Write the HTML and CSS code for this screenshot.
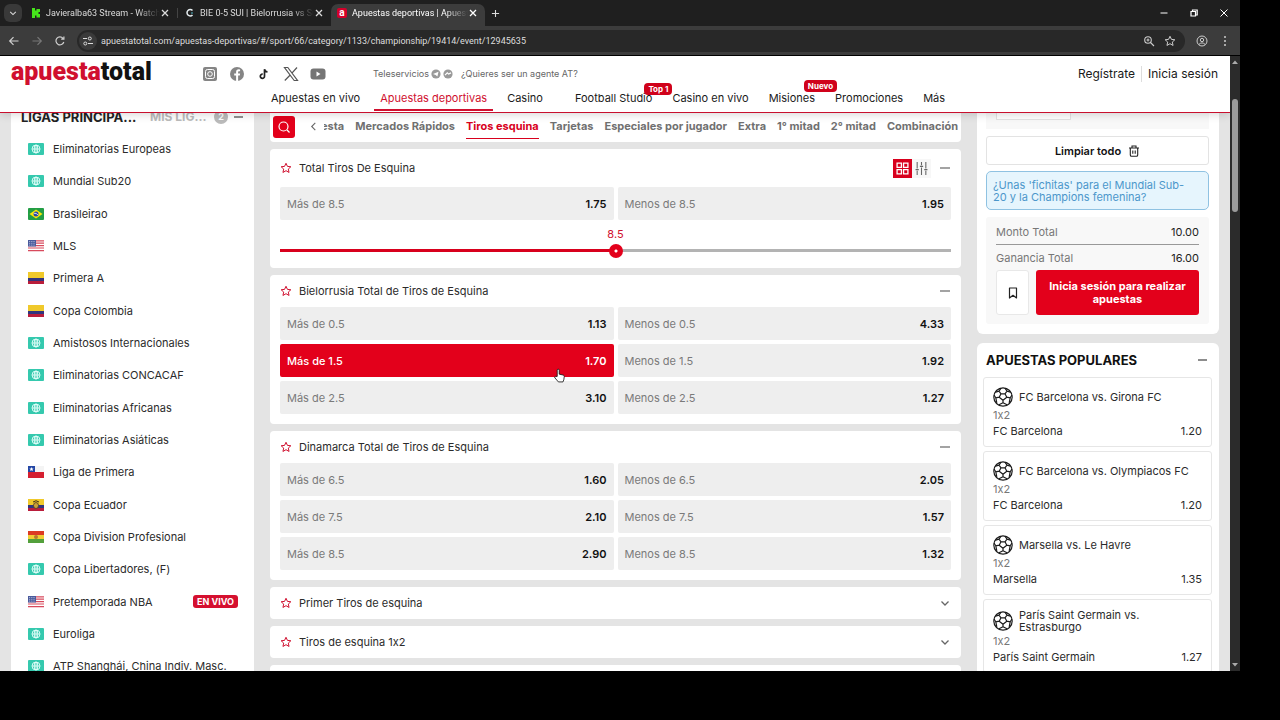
FILE: index.html
```html
<!DOCTYPE html>
<html lang="es">
<head>
<meta charset="utf-8">
<title>Apuestas deportivas | Apuesta Total</title>
<link rel="stylesheet" href="styles.css">
</head>
<body>
<svg class="defs" aria-hidden="true">
  <symbol id="star" viewBox="0 0 24 24"><path d="M12 2.500l2.900 6.300 6.800.7-5.100 4.600 1.500 6.800L12 17.400l-6.100 3.500 1.500-6.800-5.100-4.600 6.800-.7z" fill="none" stroke="currentColor" stroke-width="2" stroke-linejoin="round"/></symbol>
  <symbol id="close" viewBox="0 0 10 10"><path d="M2 2l6 6M8 2L2 8" stroke="currentColor" stroke-width="1.300" fill="none"/></symbol>
  <symbol id="minus" viewBox="0 0 10 10"><path d="M0 5h10" stroke="currentColor" stroke-width="1.200"/></symbol>
  <symbol id="down" viewBox="0 0 10 10"><path d="M1.500 3.500L5 7l3.500-3.500" stroke="currentColor" stroke-width="1.300" fill="none"/></symbol>
  <symbol id="world" viewBox="0 0 16 12"><rect width="16" height="12" rx="1" fill="#35c9ae"/><g fill="none" stroke="#e6fffa" stroke-width=".9"><circle cx="8" cy="6" r="4"/><ellipse cx="8" cy="6" rx="1.800" ry="4"/><path d="M4 6h8M8 2v8"/></g></symbol>
  <symbol id="br" viewBox="0 0 16 12"><rect width="16" height="12" rx="1" fill="#229e45"/><path d="M8 1.500L14.500 6 8 10.500 1.500 6z" fill="#f8e509"/><circle cx="8" cy="6" r="2.500" fill="#2b49a3"/><path d="M5.800 5.200q2.700-.3 4.300 1.800" stroke="#fff" stroke-width=".8" fill="none"/></symbol>
  <symbol id="us" viewBox="0 0 16 12"><rect width="16" height="12" fill="#fff"/><path d="M0 .8h16M0 3.200h16M0 5.600h16M0 8h16M0 10.600h16" stroke="#d84a5d" stroke-width="1.200"/><rect width="8" height="6.500" fill="#4a5a9c"/><path d="M1 1.500h6M1 3.300h6M1 5.100h6" stroke="#ccd3ea" stroke-width=".7" stroke-dasharray="1 .8"/></symbol>
  <symbol id="co" viewBox="0 0 16 12"><rect width="16" height="6" fill="#f0c92b"/><rect y="6" width="16" height="3" fill="#31357e"/><rect y="9" width="16" height="3" fill="#b91d3b"/></symbol>
  <symbol id="cl" viewBox="0 0 16 12"><rect width="16" height="6" fill="#f4f4f4"/><rect width="7" height="6" fill="#2447a5"/><rect y="6" width="16" height="6" fill="#d51f30"/><path d="M3.500 1l.6 1.400 1.500.1-1.100 1 .3 1.500-1.300-.8-1.300.8.300-1.500-1.100-1 1.500-.1z" fill="#fff"/></symbol>
  <symbol id="ec" viewBox="0 0 16 12"><rect width="16" height="6" fill="#f0c92b"/><rect y="6" width="16" height="3" fill="#31357e"/><rect y="9" width="16" height="3" fill="#b91d3b"/><ellipse cx="8" cy="6.500" rx="2.500" ry="3" fill="#c9a13a" stroke="#4b3a20" stroke-width=".8"/><path d="M5 3q3-2.500 6 0" stroke="#3b2d1c" fill="none"/></symbol>
  <symbol id="bo" viewBox="0 0 16 12"><rect width="16" height="4" fill="#dc3b24"/><rect y="4" width="16" height="4" fill="#f1cf35"/><rect y="8" width="16" height="4" fill="#53a03c"/><circle cx="8" cy="6" r="2" fill="#b57b30"/></symbol>
  <symbol id="ball" viewBox="0 0 20 20"><g fill="none" stroke="#1b1b1b" stroke-width="1.200" stroke-linejoin="round"><circle cx="10" cy="10" r="9.200"/><path d="M8 6.800h4l1.800 3.400L10 13.200 6.200 10.200zM8 6.800L6 4.200M12 6.800l2-2.600M13.800 10.200l3.400.6M6.200 10.200l-3.400.6M10 13.200v2.600M6 4.200L2.600 5.200M6 4.200L8 1.200M14 4.200l3.400 1M14 4.200l-2-3M17.200 10.800L19 8M17.200 10.800l-1 5M2.800 10.800L1 8M2.800 10.800l1 5M10 15.800l-4 2M10 15.800l4 2"/></g></symbol>
</svg>

<div class="window">
  <div class="tabstrip">
    <button class="tabmenu" aria-label="Buscar pestañas"><svg viewBox="0 0 10 10"><use href="#down"/></svg></button>
    <div class="tab"><svg class="fav" viewBox="0 0 10 10"><path d="M1 0h3v2.500h1.500V1H9v3H7.500v2H9v3.500H5.500V7.500H4V10H1z" fill="#46e51b"/></svg><span class="tabname">Javieralba63 Stream - Watch Li</span><svg class="x" viewBox="0 0 10 10"><use href="#close"/></svg></div>
    <div class="tab divided"><svg class="fav" viewBox="0 0 10 10"><path d="M7.500 2.500A3.200 3.200 0 1 0 7.500 7" fill="none" stroke="#e6edf0" stroke-width="1.500"/><path d="M6 5h2" stroke="#4cb6c7"/></svg><span class="tabname">BIE 0-5 SUI | Bielorrusia vs Suiz</span><svg class="x" viewBox="0 0 10 10"><use href="#close"/></svg></div>
    <div class="tab active"><span class="fav at">a</span><span class="tabname">Apuestas deportivas | Apuesta</span><svg class="x" viewBox="0 0 10 10"><use href="#close"/></svg></div>
    <button class="newtab" aria-label="Nueva pestaña"><svg viewBox="0 0 10 10"><path d="M5 1v8M1 5h8" stroke="currentColor" stroke-width="1.200"/></svg></button>
    <div class="winctl">
      <svg viewBox="0 0 10 10"><path d="M1.500 5h7" stroke="#fff"/></svg>
      <svg viewBox="0 0 10 10"><path d="M2 3.500h4.500V8H2zM3.500 3V2h4.700v5H7" fill="none" stroke="#fff" stroke-width="1.200"/></svg>
      <svg viewBox="0 0 10 10"><path d="M1.500 1.500l7 7M8.500 1.500l-7 7" stroke="#fff"/></svg>
    </div>
  </div>
  <div class="toolbar">
    <svg viewBox="0 0 12 12"><path d="M10.500 6H2M5.500 2.200L1.700 6l3.800 3.800" fill="none" stroke="#d0d0d0" stroke-width="1.200"/></svg>
    <svg viewBox="0 0 12 12"><path d="M1.500 6H10M6.500 2.200L10.300 6 6.500 9.800" fill="none" stroke="#777" stroke-width="1.200"/></svg>
    <svg viewBox="0 0 12 12"><path d="M9.800 7A4 4 0 1 1 9 3.300M9.900 1.500v2.700H7.200" fill="none" stroke="#d0d0d0" stroke-width="1.200"/></svg>
    <div class="address">
      <span class="siteinfo"><svg viewBox="0 0 12 12"><path d="M1 3.500h4M6 8.500h5" stroke="#ddd"/><circle cx="7.800" cy="3.500" r="1.500" fill="none" stroke="#ddd"/><circle cx="3.300" cy="8.500" r="1.500" fill="none" stroke="#ddd"/></svg></span>
      <input class="url" aria-label="Dirección" value="apuestatotal.com/apuestas-deportivas/#/sport/66/category/1133/championship/19414/event/12945635">
      <svg viewBox="0 0 12 12"><circle cx="5" cy="5" r="3.300" fill="none" stroke="#ccc" stroke-width="1.100"/><path d="M7.500 7.500L11 11M3.500 5h3M5 3.500v3" stroke="#ccc" stroke-width="1.100"/></svg>
      <svg class="fave" viewBox="0 0 24 24"><use href="#star"/></svg>
    </div>
    <svg viewBox="0 0 12 12"><g fill="none" stroke="#ccc"><circle cx="6" cy="6" r="5"/><circle cx="6" cy="5" r="1.700"/><path d="M2.800 9.500Q6 6.300 9.200 9.500"/></g></svg>
    <svg viewBox="0 0 12 12" fill="#ccc"><circle cx="6" cy="2" r="1"/><circle cx="6" cy="6" r="1"/><circle cx="6" cy="10" r="1"/></svg>
  </div>

  <div class="viewport">
    <div class="page">
      <header class="site">
        <div class="top">
          <a class="logo" href="#"><b>apuesta</b>total</a>
          <div class="social">
            <svg viewBox="0 0 16 16"><rect x="1" y="1" width="14" height="14" rx="2" fill="#858585"/><rect x="3.500" y="3.500" width="9" height="9" rx="2" fill="none" stroke="#fff"/><circle cx="8" cy="8" r="2.300" fill="none" stroke="#fff"/></svg>
            <svg viewBox="0 0 16 16"><circle cx="8" cy="8" r="7" fill="#858585"/><path d="M7.100 15V9.600H5.200V7.500h1.900V6.100c0-1.900 1-2.800 2.600-2.800l1.400.1v1.800h-.9c-.8 0-1.100.4-1.100 1v1.300h2l-.3 2.100H9.100V15z" fill="#fff"/></svg>
            <svg viewBox="0 0 16 16"><path d="M8.500 3.200v7a2.100 2.100 0 1 1-1.800-2M8.500 3.200q.3 2.500 3 2.700" fill="none" stroke="#222" stroke-width="1.700"/></svg>
            <svg viewBox="0 0 16 16"><path d="M1.500 1.500h3.300l9.700 13h-3.300zM14 1.500L8.900 7.200M7.200 9l-5.400 5.500" fill="none" stroke="#555" stroke-width="1.200"/></svg>
            <svg viewBox="0 0 16 16"><rect x=".5" y="2.500" width="15" height="11" rx="3" fill="#757575"/><path d="M6.500 5.500v5l4-2.500z" fill="#fff"/></svg>
          </div>
          <div class="tele"><span>Teleservicios</span>
            <svg viewBox="0 0 10 10"><circle cx="5" cy="5" r="4.600" fill="#999"/><path d="M2 5l5.500-2.200L6.400 7.500 4.600 6z" fill="#fff"/></svg>
            <svg viewBox="0 0 10 10"><circle cx="5" cy="5" r="4.600" fill="#999"/><path d="M2 6.200l2.300-2.300 1.300 1.200L8 3.900" stroke="#fff" stroke-width="1.200" fill="none"/></svg>
          </div>
          <a class="agent" href="#">¿Quieres ser un agente AT?</a>
          <div class="account"><a href="#">Regístrate</a><a href="#">Inicia sesión</a></div>
        </div>
        <nav class="main">
          <a href="#">Apuestas en vivo</a><a href="#" class="on">Apuestas deportivas</a><a href="#" class="wide">Casino</a><a href="#">Football Studio<span class="badge">Top 1</span></a><a href="#">Casino en vivo</a><a href="#">Misiones<span class="badge high">Nuevo</span></a><a href="#">Promociones</a><a href="#">Más</a>
        </nav>
      </header>

      <div class="columns">
        <aside class="leagues">
          <div class="ltabs"><h2>LIGAS PRINCIPA...</h2><span>MIS LIG...</span><i>2</i><svg viewBox="0 0 10 10"><use href="#minus"/></svg></div>
          <ul>
            <li><a href="#"><svg><use href="#world"/></svg>Eliminatorias Europeas</a></li>
            <li><a href="#"><svg><use href="#world"/></svg>Mundial Sub20</a></li>
            <li><a href="#"><svg><use href="#br"/></svg>Brasileirao</a></li>
            <li><a href="#"><svg><use href="#us"/></svg>MLS</a></li>
            <li><a href="#"><svg><use href="#co"/></svg>Primera A</a></li>
            <li><a href="#"><svg><use href="#co"/></svg>Copa Colombia</a></li>
            <li><a href="#"><svg><use href="#world"/></svg>Amistosos Internacionales</a></li>
            <li><a href="#"><svg><use href="#world"/></svg>Eliminatorias CONCACAF</a></li>
            <li><a href="#"><svg><use href="#world"/></svg>Eliminatorias Africanas</a></li>
            <li><a href="#"><svg><use href="#world"/></svg>Eliminatorias Asiáticas</a></li>
            <li><a href="#"><svg><use href="#cl"/></svg>Liga de Primera</a></li>
            <li><a href="#"><svg><use href="#ec"/></svg>Copa Ecuador</a></li>
            <li><a href="#"><svg><use href="#bo"/></svg>Copa Division Profesional</a></li>
            <li><a href="#"><svg><use href="#world"/></svg>Copa Libertadores, (F)</a></li>
            <li><a href="#"><svg><use href="#us"/></svg>Pretemporada NBA<span class="live">EN VIVO</span></a></li>
            <li><a href="#"><svg><use href="#world"/></svg>Euroliga</a></li>
            <li><a href="#"><svg><use href="#world"/></svg>ATP Shanghái, China Indiv. Masc.</a></li>
          </ul>
        </aside>

        <main class="markets">
          <div class="panel filter">
            <button class="search" aria-label="Buscar"><svg viewBox="0 0 14 14"><circle cx="6.500" cy="6.500" r="4.500" fill="none" stroke="#fff" stroke-width="1.200"/><path d="M10 10l2.500 2.500" stroke="#fff" stroke-width="1.200"/></svg></button>
            <button class="prev" aria-label="Anterior"><svg viewBox="0 0 10 10"><path d="M7 1L3 5l4 4" fill="none" stroke="#666" stroke-width="1.200"/></svg></button>
            <div class="cats"><a href="#">esta</a><a href="#">Mercados Rápidos</a><a href="#" class="on">Tiros esquina</a><a href="#">Tarjetas</a><a href="#">Especiales por jugador</a><a href="#">Extra</a><a href="#">1° mitad</a><a href="#">2° mitad</a><a href="#">Combinación</a></div>
          </div>

          <section class="panel">
            <div class="head tall"><svg class="st"><use href="#star"/></svg><h3>Total Tiros De Esquina</h3>
              <button class="view on" aria-label="Cuadrícula"><svg viewBox="0 0 12 12"><path d="M1 1h4v4H1zM7 1h4v4H7zM1 7h4v4H1zM7 7h4v4H7z" fill="none" stroke="#fff" stroke-width="1.200"/></svg></button>
              <button class="view" aria-label="Deslizador"><svg viewBox="0 0 12 12"><path d="M2 0v6M2 8v4M6 0v3M6 5v7M10 0v6M10 8v4M.5 7h3M4.500 4h3M8.500 7h3" stroke="#666" fill="none"/></svg></button>
              <svg class="fold"><use href="#minus"/></svg></div>
            <div class="odds">
              <button><span>Más de 8.5</span><b>1.75</b></button><button><span>Menos de 8.5</span><b>1.95</b></button>
            </div>
            <div class="slide"><label for="line">8.5</label><input id="line" type="range" min="6.5" max="10.5" step="1" value="8.5"></div>
          </section>

          <section class="panel">
            <div class="head"><svg class="st"><use href="#star"/></svg><h3>Bielorrusia Total de Tiros de Esquina</h3><svg class="fold"><use href="#minus"/></svg></div>
            <div class="odds end">
              <button><span>Más de 0.5</span><b>1.13</b></button><button><span>Menos de 0.5</span><b>4.33</b></button>
              <button class="sel"><span>Más de 1.5</span><b>1.70</b><svg class="hand" viewBox="0 0 12 16"><path d="M3.500 9V2.200a1.100 1.100 0 0 1 2.200 0V6.500l4.300 1q1.300.4 1.200 1.700l-.5 3.500-.9 2.300H4.800L1 10.600q-.8-1.300.5-1.600z" fill="#fff" stroke="#111" stroke-width=".9"/></svg></button><button><span>Menos de 1.5</span><b>1.92</b></button>
              <button><span>Más de 2.5</span><b>3.10</b></button><button><span>Menos de 2.5</span><b>1.27</b></button>
            </div>
          </section>

          <section class="panel">
            <div class="head"><svg class="st"><use href="#star"/></svg><h3>Dinamarca Total de Tiros de Esquina</h3><svg class="fold"><use href="#minus"/></svg></div>
            <div class="odds end">
              <button><span>Más de 6.5</span><b>1.60</b></button><button><span>Menos de 6.5</span><b>2.05</b></button>
              <button><span>Más de 7.5</span><b>2.10</b></button><button><span>Menos de 7.5</span><b>1.57</b></button>
              <button><span>Más de 8.5</span><b>2.90</b></button><button><span>Menos de 8.5</span><b>1.32</b></button>
            </div>
          </section>

          <section class="panel"><div class="head"><svg class="st"><use href="#star"/></svg><h3>Primer Tiros de esquina</h3><svg class="fold"><use href="#down"/></svg></div></section>
          <section class="panel"><div class="head"><svg class="st"><use href="#star"/></svg><h3>Tiros de esquina 1x2</h3><svg class="fold"><use href="#down"/></svg></div></section>
          <section class="panel"><div class="head"></div></section>
        </main>

        <aside class="slip">
          <section class="ticket">
            <div class="stake"><div class="field"></div></div>
            <button class="clear">Limpiar todo <svg viewBox="0 0 12 12"><path d="M1 3h10M2.300 3v7q0 1.300 1.300 1.300h4.800q1.300 0 1.300-1.300V3M4 3V1h4v2M4.800 5.500v3.300M7.200 5.500v3.300" fill="none" stroke="#222" stroke-width="1.100"/></svg></button>
            <a class="promo" href="#">¿Unas 'fichitas' para el Mundial Sub-20 y la Champions femenina?</a>
            <div class="totals">
              <p class="ruled"><span>Monto Total</span><b>10.00</b></p>
              <p><span>Ganancia Total</span><b>16.00</b></p>
              <div class="acts"><button class="save" aria-label="Guardar"><svg viewBox="0 0 12 12"><path d="M2.500 1h7v10L6 8.300 2.500 11z" fill="none" stroke="#222" stroke-width="1.200" stroke-linejoin="round"/></svg></button><button class="login">Inicia sesión para realizar apuestas</button></div>
            </div>
          </section>
          <section class="popular">
            <div class="phead"><h2>APUESTAS POPULARES</h2><svg><use href="#minus"/></svg></div>
            <article><h4><svg><use href="#ball"/></svg>FC Barcelona vs. Girona FC</h4><p class="mk">1x2</p><p><span>FC Barcelona</span><span>1.20</span></p></article>
            <article><h4><svg><use href="#ball"/></svg>FC Barcelona vs. Olympiacos FC</h4><p class="mk">1x2</p><p><span>FC Barcelona</span><span>1.20</span></p></article>
            <article><h4><svg><use href="#ball"/></svg>Marsella vs. Le Havre</h4><p class="mk">1x2</p><p><span>Marsella</span><span>1.35</span></p></article>
            <article><h4><svg><use href="#ball"/></svg>París Saint Germain vs. Estrasburgo</h4><p class="mk">1x2</p><p><span>París Saint Germain</span><span>1.27</span></p></article>
          </section>
        </aside>
      </div>
    </div>
    <div class="scroll"><svg viewBox="0 0 10 10"><path d="M2 7h6L5 3.500z" fill="#aaa"/></svg><div class="track"><div class="thumb"></div></div><svg viewBox="0 0 10 10"><path d="M2 3h6L5 6.500z" fill="#aaa"/></svg></div>
  </div>
</div>
</body>
</html>
```
FILE: styles.css
```css
* { box-sizing: border-box; margin: 0; padding: 0; }
body { height: 100vh; padding: 0 40px 49px 0; background: #000; overflow: hidden; font: 11px/16px Inter, "Liberation Sans", sans-serif; font-feature-settings: "calt" 0; color: #2b2b2b; }
.defs { position: absolute; width: 0; height: 0; }
button { font: inherit; border: 0; background: none; color: inherit; }
a { color: inherit; text-decoration: none; }
ul { list-style: none; }
svg { display: block; flex: none; }
.window { height: 100%; display: flex; flex-direction: column; overflow: hidden; }

/* Browser frame */
.tabstrip { display: flex; height: 26px; background: #1f1f1f; color: #dcdcdc; font: 9px/12px Roboto, "Noto Sans", sans-serif; flex: none; }
.tabmenu { width: 18px; height: 18px; margin: 4px 1px 4px 4px; border-radius: 6px; background: #393939; }
.tabmenu svg { width: 8px; height: 8px; margin: 0 auto; }
.tab { width: 154px; display: flex; align-items: center; gap: 5px; padding: 0 7px 0 8px; position: relative; }
.tab .x { margin-left: -5px; }
.divided::before { content: ""; position: absolute; left: 0; top: 8px; width: 1px; height: 10px; background: #444; }
.tab.active { background: #3c3c3c; margin-top: 4px; border-radius: 7px 7px 0 0; padding: 0 7px 4px 6px; color: #fff; }
.fav { width: 10px; height: 10px; flex: none; }
.at { background: #d4002a; color: #fff; border-radius: 2px; font: 700 10px/9px Roboto, sans-serif; text-align: center; }
.tabname { flex: 1; overflow: hidden; white-space: nowrap; mask-image: linear-gradient(to right, #000 80%, transparent); }
.x { width: 10px; height: 10px; }
.newtab { width: 20px; }
.newtab svg { width: 9px; height: 9px; margin: 0 auto; }
.winctl { margin-left: auto; display: flex; align-items: center; gap: 20px; padding-right: 11px; }
.winctl svg { width: 10px; height: 10px; }
.toolbar { display: flex; align-items: center; gap: 11px; height: 30px; padding: 0 9px 0 8px; background: #3c3c3c; border-bottom: 1px solid #000; flex: none; }
.toolbar svg { width: 12px; height: 12px; }
.address { flex: 1; display: flex; align-items: center; gap: 9px; height: 22px; padding: 0 9px 0 1px; border-radius: 11px; background: #282828; color: #ccc; }
.siteinfo { width: 18px; height: 18px; padding: 3px; margin: 0 -5px 0 1px; border-radius: 9px; background: #3a3a3a; }
.url { flex: 1; border: 0; background: none; color: #dedede; font: 9px/12px Roboto, "Noto Sans", sans-serif; outline: 0; }

.viewport { flex: 1; display: flex; min-height: 0; }
.page { flex: 1; display: flex; flex-direction: column; min-width: 0; background: #e4e4e4; overflow: hidden; }
.scroll { width: 10px; display: flex; flex-direction: column; background: #2b2b2b; }
.scroll svg { width: 10px; height: 12px; }
.track { flex: 1; padding: 31px 2px 0; }
.thumb { height: 113px; border-radius: 3px; background: #9b9b9b; }

/* Site header */
.site { position: relative; z-index: 2; height: 57px; flex: none; background: #fff; border-bottom: 1px solid #c8102e; box-shadow: 0 2px 8px rgba(0,0,0,.15); }
.top { display: flex; align-items: center; height: 35px; padding: 0 12px 0 11px; color: #666; font-size: 9px; }
.logo { width: 191px; margin-top: -3px; font: 900 25px/32px Roboto, sans-serif; color: #111; }
.logo b { color: #d0102f; }
.social { display: flex; gap: 11px; width: 171px; }
.social svg { width: 16px; height: 16px; }
.tele { display: flex; align-items: center; gap: 2px; }
.tele svg { width: 10px; height: 10px; }
.agent { margin-left: 8px; }
.account { margin-left: auto; display: flex; font-size: 12px; color: #1a1a1a; }
.account a + a { margin-left: 6px; padding-left: 6px; border-left: 1px solid #ddd; }
.main { display: flex; gap: 8px; padding-left: 265px; height: 20px; color: #1a1a1a; }
.main a { position: relative; padding: 0 6px; line-height: 15px; white-space: nowrap; }
.main .on { color: #d0102f; border-bottom: 2px solid #d0102f; }
.main .wide { margin-right: 12px; }
.badge { position: absolute; right: -14px; top: -8px; padding: 0 4px; border-radius: 4px; background: #d0021b; color: #fff; font-size: 8px; line-height: 12px; font-weight: 700; }
.badge.high { top: -11px; right: -16px; }

.columns { flex: 1; min-height: 0; display: grid; grid-template-columns: 243px minmax(0, 1fr) 242px; gap: 16px; padding: 0 11px; }

/* Leagues */
.leagues { background: #fff; overflow: hidden; }
.ltabs { display: flex; align-items: center; height: 20px; margin: -6px 0 6px; padding: 0 11px 0 10px; font-size: 12px; font-weight: 700; color: #bbb; }
.ltabs h2 { width: 129px; font-size: 13px; color: #222; white-space: nowrap; }
.ltabs i { width: 14px; height: 14px; margin: 0 6px 0 auto; border-radius: 7px; background: #bbb; color: #fff; font: 700 9px/14px Inter, sans-serif; text-align: center; }
.ltabs svg { width: 9px; height: 10px; color: #222; }
.leagues li { height: 32px; }
.leagues li:nth-child(3n) { height: 33px; }
.leagues li a { display: flex; align-items: center; height: 100%; padding: 0 16px 0 17px; gap: 9px; white-space: nowrap; }
.leagues li svg { width: 16px; height: 12px; }
.live { margin-left: auto; padding: 0 4px; border-radius: 3px; background: #d5102f; color: #fff; font-size: 9px; font-weight: 700; line-height: 13px; }

/* Markets */
.markets { display: flex; flex-direction: column; gap: 7px; overflow: hidden; }
.panel { background: #fff; border-radius: 4px; flex: none; }
.filter { display: flex; align-items: center; height: 29px; padding: 0 3px 2px; border-radius: 0 0 4px 4px; }
.search { width: 22px; height: 22px; padding: 4px; border-radius: 3px; background: #e3001b; }
.prev { width: 20px; margin-left: 8px; }
.prev svg { width: 9px; height: 9px; margin: 0 auto; }
.cats { flex: 1; min-width: 0; margin-left: 1px; overflow: hidden; display: flex; justify-content: flex-end; gap: 11px; color: #707070; font-weight: 700; white-space: nowrap; }
.cats a { line-height: 23px; border-bottom: 1px solid transparent; }
.cats .on { color: #d8001d; border-color: #d8001d; }
.head { display: flex; align-items: center; height: 32px; padding: 0 11px 0 10px; color: #666; }
.head.tall { height: 38px; }
.head h3 { flex: 1; margin-left: 7px; font-size: 11px; font-weight: 400; color: #2b2b2b; }
.st { width: 12px; height: 12px; color: #d0102f; }
.fold { width: 10px; height: 10px; }
.view { width: 19px; height: 19px; padding: 3px; background: #f7f7f7; }
.view.on { background: #d8001d; }
.view svg { width: 13px; height: 13px; }
.view + .fold { margin-left: 9px; }
.odds { display: grid; grid-template-columns: 1fr 1fr; gap: 4px; padding: 0 10px; }
.odds.end { padding-bottom: 10px; }
.odds button { position: relative; display: flex; justify-content: space-between; align-items: center; height: 33px; padding: 0 7px; border-radius: 2px; background: #eee; color: #7a7a7a; }
.odds b { color: #111; font-weight: 600; }
.odds .sel { background: #e3001b; color: #fff; font-weight: 500; z-index: 1; }
.odds .sel b { color: #fff; }
.hand { position: absolute; right: 49px; top: 24px; width: 11px; height: 15px; }
.slide { display: flex; flex-direction: column; align-items: center; padding: 6px 10px 9px; color: #d0102f; }
.slide input { appearance: none; width: 100%; height: 17px; background: linear-gradient(to right, #d8001d 50%, #b3b3b3 50%) center / 100% 3px no-repeat; }
.slide input::-webkit-slider-thumb { appearance: none; width: 14px; height: 14px; border-radius: 7px; background: radial-gradient(circle, #fff 1px, #e3001b 2px); }

/* Bet slip */
.slip { overflow: hidden; display: flex; flex-direction: column; gap: 9px; }
.ticket { padding: 0 10px 10px 9px; background: #fff; border-radius: 0 0 6px 6px; flex: none; }
.stake { height: 16px; padding: 0 10px; background: #f8f8f8; }
.field { width: 75px; height: 7px; background: #fff; border: 1px solid #e3e3e3; border-top: 0; }
.clear { display: flex; align-items: center; justify-content: center; gap: 7px; width: 100%; height: 29px; margin: 7px 0 6px; border: 1px solid #e3e3e3; border-radius: 3px; color: #111; font-weight: 600; }
.clear svg { width: 12px; height: 12px; }
.promo { display: block; padding: 7px 16px 6px 6px; border: 1px solid #8fc2e2; border-radius: 5px; background: #e6f5fd; color: #4c97cb; line-height: 12px; }
.totals { margin-top: 7px; padding: 6px 10px 9px; background: #f8f8f8; border-radius: 3px; }
.totals p { display: flex; justify-content: space-between; line-height: 18px; margin-bottom: 3px; color: #777; }
.totals .ruled { height: 22px; border-bottom: 1px solid #999; margin-bottom: 4px; }
.totals b { font-weight: 400; color: #222; }
.acts { display: flex; gap: 7px; height: 45px; }
.save { width: 33px; border: 1px solid #e8e8e8; border-radius: 3px; background: #fff; }
.save svg { width: 12px; height: 12px; margin: 0 auto; }
.login { flex: 1; padding: 0 8px; border-radius: 3px; background: #e3001b; color: #fff; font-weight: 700; line-height: 13px; }
.popular { padding: 0 7px 0 6px; background: #fff; border-radius: 6px 6px 0 0; flex: none; }
.phead { display: flex; align-items: center; justify-content: space-between; height: 34px; padding: 0 5px 0 3px; }
.phead h2 { font-size: 13px; font-weight: 700; color: #111; }
.phead svg { width: 9px; height: 10px; }
article { margin-bottom: 4px; padding: 9px 9px 7px; border: 1px solid #e6e6e6; border-radius: 3px; }
article h4 { display: flex; align-items: center; gap: 6px; min-height: 20px; font-size: 11px; font-weight: 400; line-height: 12px; }
article h4 svg { width: 20px; height: 20px; }
article p { display: flex; justify-content: space-between; }
article .mk { color: #777; }
```
